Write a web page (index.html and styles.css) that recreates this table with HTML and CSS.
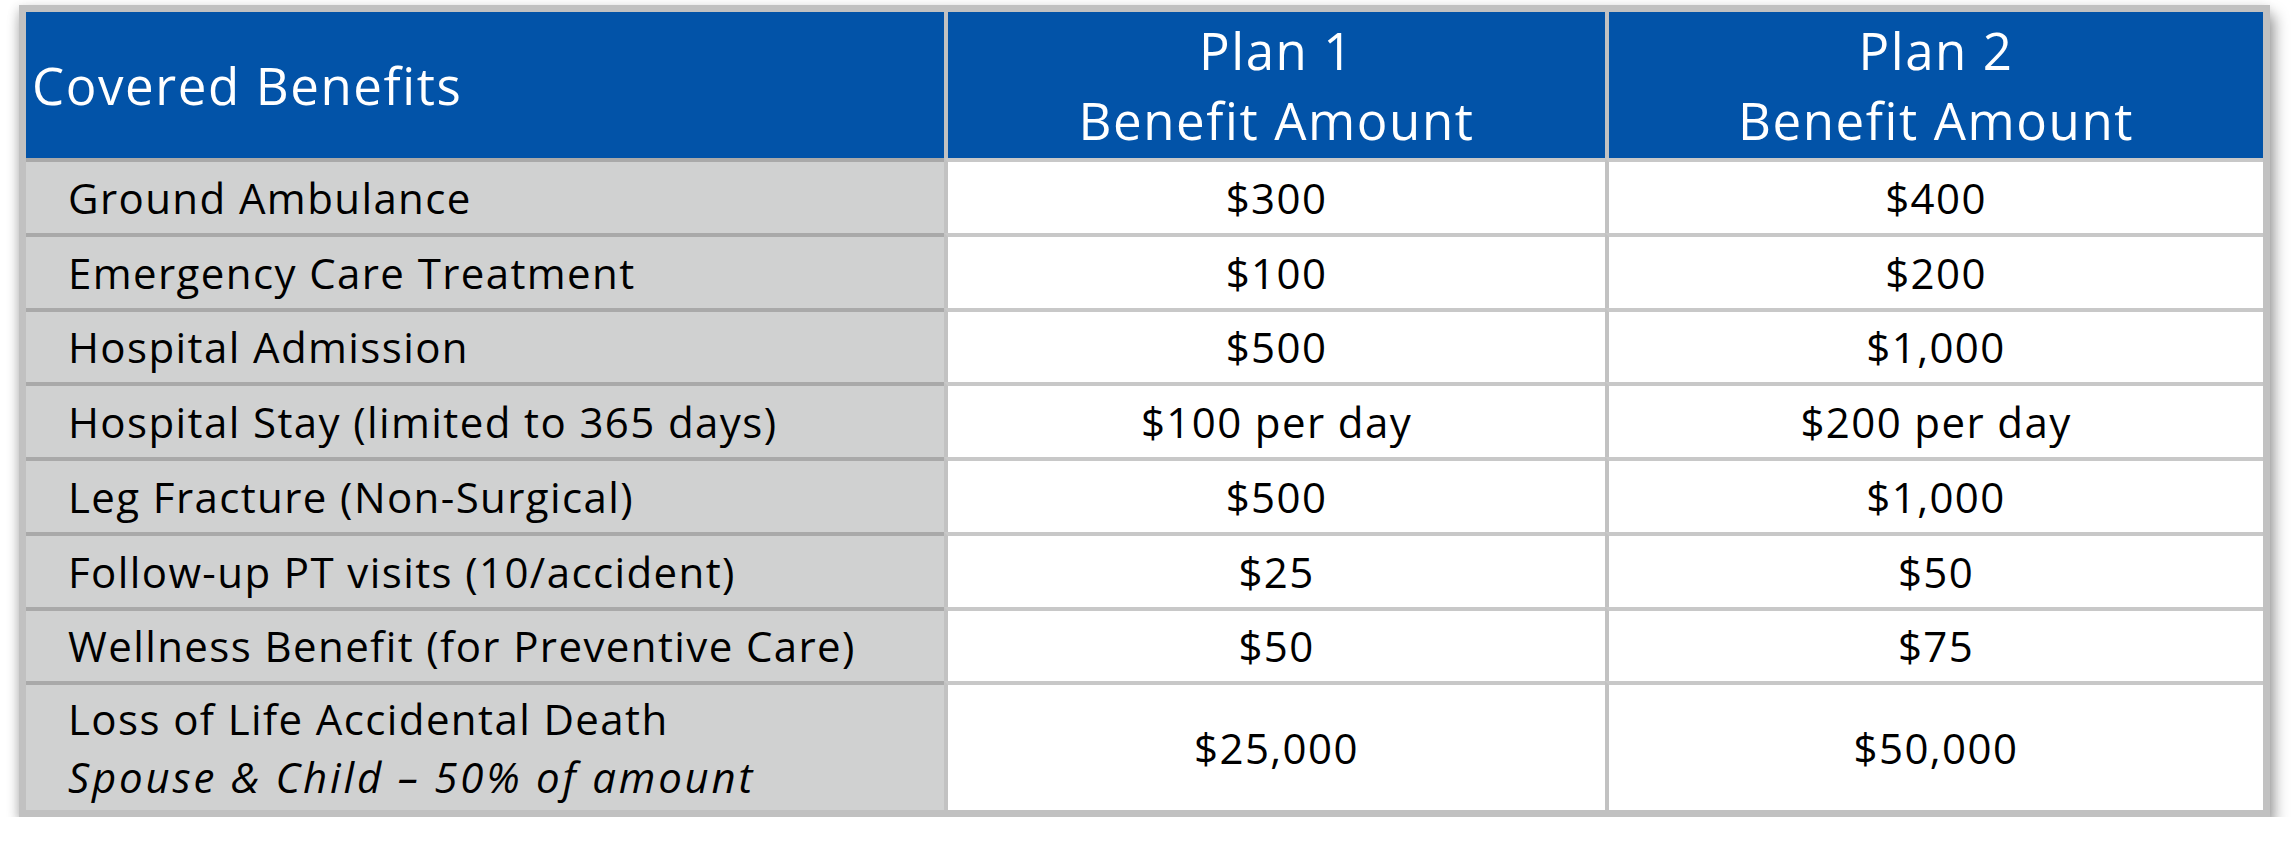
FILE: index.html
```html
<!DOCTYPE html>
<html lang="en">
<head>
<meta charset="utf-8">
<title>Covered Benefits</title>
<link rel="stylesheet" href="styles.css">
</head>
<body>
<div class="frame">
  <div class="table">
    <div class="cell head first">Covered Benefits</div>
    <div class="cell head plan"><span class="hline">Plan 1</span><span class="hline">Benefit Amount</span></div>
    <div class="cell head plan"><span class="hline">Plan 2</span><span class="hline">Benefit Amount</span></div>

    <div class="cell label">Ground Ambulance</div>
    <div class="cell amt">$300</div>
    <div class="cell amt">$400</div>

    <div class="cell label">Emergency Care Treatment</div>
    <div class="cell amt">$100</div>
    <div class="cell amt">$200</div>

    <div class="cell label">Hospital Admission</div>
    <div class="cell amt">$500</div>
    <div class="cell amt">$1,000</div>

    <div class="cell label">Hospital Stay (limited to 365 days)</div>
    <div class="cell amt">$100 per day</div>
    <div class="cell amt">$200 per day</div>

    <div class="cell label">Leg Fracture (Non-Surgical)</div>
    <div class="cell amt">$500</div>
    <div class="cell amt">$1,000</div>

    <div class="cell label">Follow-up PT visits (10/accident)</div>
    <div class="cell amt">$25</div>
    <div class="cell amt">$50</div>

    <div class="cell label">Wellness Benefit (for Preventive Care)</div>
    <div class="cell amt">$50</div>
    <div class="cell amt">$75</div>

    <div class="cell label multi">
      <span class="line">Loss of Life Accidental Death</span>
      <span class="line note">Spouse &amp; Child – 50% of amount</span>
    </div>
    <div class="cell amt">$25,000</div>
    <div class="cell amt">$50,000</div>
  </div>
</div>
</body>
</html>
```

FILE: styles.css
```css
html, body {
  margin: 0;
  padding: 0;
  background: #ffffff;
}

body {
  padding: 5px 0 0 19px;
  font-family: "Open Sans", "Noto Sans", sans-serif;
}

.frame {
  width: 2237px;
  border: 7px solid #c1c1c1;
  box-shadow: 4px 10px 14px rgba(0, 0, 0, 0.4), -2px 2px 10px rgba(0, 0, 0, 0.12);
}

.table {
  display: grid;
  grid-template-columns: 918px 661px 658px;
  grid-template-rows: 146px repeat(7, 74.75px) 128.75px;
}

.cell {
  box-sizing: border-box;
  display: flex;
  align-items: center;
  color: #000000;
  font-size: 42px;
  letter-spacing: 1.4px;
  background: #ffffff;
  border-top: 4px solid #c8c8c8;
  border-left: 4px solid #c2c2c2;
  white-space: nowrap;
}

.head {
  background: #0253a8;
  color: #ffffff;
  border-top: none;
  font-size: 51px;
  line-height: 70px;
  letter-spacing: 1.6px;
}

.head.first {
  border-left: none;
  padding-left: 6px;
}

.head.plan {
  flex-direction: column;
  justify-content: center;
  text-align: center;
}

.hline {
  display: block;
}

.label {
  background: #d0d1d1;
  border-left: none;
  border-top-color: #a9a9a9;
  padding-left: 42px;
}

.amt {
  justify-content: center;
}

.multi {
  flex-direction: column;
  align-items: flex-start;
  justify-content: center;
  line-height: 58px;
}

.note {
  font-style: italic;
  letter-spacing: 2.8px;
}
```
